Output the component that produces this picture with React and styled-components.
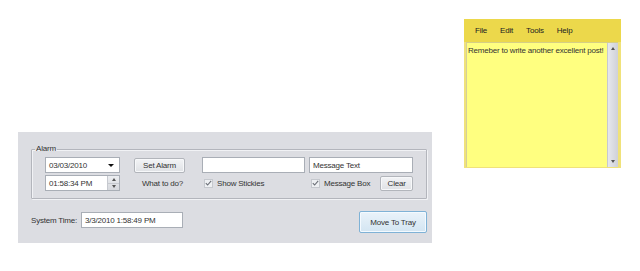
import styled, { createGlobalStyle } from "styled-components";

const Global = createGlobalStyle`
  html, body { margin: 0; padding: 0; background: #fff; }
  body {
    font-family: "Liberation Sans", Arial, sans-serif;
    font-size: 8px;
    letter-spacing: -0.2px;
    color: #333;
  }
`

const Page = styled.div`
  display: flex;
  align-items: flex-start;
  width: 640px;
  height: 271px;
`

const Panel = styled.div`
  margin: 132px 0 0 18px;
  width: 414px;
  box-sizing: border-box;
  padding: 12px 5px 10px 13px;
  background: #dcdde2;
`

const Group = styled.fieldset`
  margin: 0;
  padding: 3px 0 7px 3px;
  border: 1px solid #b3b5bc;
  box-shadow: inset 1px 1px 0 #f1f2f5, 1px 1px 0 #f1f2f5;
  border-radius: 1px;
  legend {
    padding: 0 1px;
    line-height: 10px;
  }
`

const Grid = styled.div`
  margin-left: 10px;
  display: grid;
  grid-template-columns: 89px 68px 107px 104px;
  grid-template-rows: 16px 16px;
  row-gap: 2px;
  align-items: center;
`

const Field = styled.div`
  box-sizing: border-box;
  width: ${(p) => p.w}px;
  height: ${(p) => p.h || 16}px;
  background: #fff;
  border: 1px solid #a9aeb6;
  display: flex;
  align-items: center;
  padding-left: 3px;
  white-space: nowrap;
`

const Arrow = styled.span`
  margin-left: auto;
  margin-right: 5px;
  width: 0;
  height: 0;
  border-left: 3px solid transparent;
  border-right: 3px solid transparent;
  border-top: 3px solid #111;
`

const Spin = styled.div`
  margin-left: auto;
  width: 11px;
  height: 100%;
  display: flex;
  flex-direction: column;
  background: linear-gradient(#eceef1, #d6d8dd);
  border-left: 1px solid #c6c9cf;
  > div {
    flex: 1;
    display: flex;
    align-items: center;
    justify-content: center;
  }
  > div + div { border-top: 1px solid #c6c9cf; }
`

const Tri = styled.span`
  width: 0;
  height: 0;
  border-left: 2.5px solid transparent;
  border-right: 2.5px solid transparent;
  ${(p) => (p.up ? "border-bottom: 3px solid #555;" : "border-top: 3px solid #555;")}
`

const Button = styled.button`
  box-sizing: border-box;
  width: ${(p) => p.w}px;
  height: ${(p) => p.h}px;
  padding: 0;
  font-family: inherit;
  font-size: 8px;
  letter-spacing: -0.2px;
  color: #333;
  white-space: nowrap;
  border: 1px solid ${(p) => (p.focus ? "#7fb2d6" : "#b2b5bb")};
  border-radius: 2px;
  background: ${(p) =>
    p.focus ? "linear-gradient(#eaf3fa, #d3e5f2)" : "linear-gradient(#f3f4f6, #dfe1e5)"};
  box-shadow: inset 0 0 0 1px ${(p) => (p.focus ? "#f4faff" : "#f7f8fa")};
`

const Label = styled.span`
  white-space: nowrap;
  padding-left: ${(p) => p.pl || 0}px;
  width: ${(p) => (p.w ? p.w + "px" : "auto")};
`

const Check = styled.label`
  display: flex;
  align-items: center;
  gap: 4px;
  white-space: nowrap;
  padding-left: 2px;
`

const Box = styled.span`
  box-sizing: border-box;
  width: 9px;
  height: 9px;
  border: 1px solid #c5c8ce;
  background: #eef0f3;
  display: flex;
  align-items: center;
  justify-content: center;
`

const Cell = styled.div`
  display: flex;
  align-items: center;
  gap: ${(p) => p.gap || 0}px;
`

const Bottom = styled.div`
  margin-top: 12px;
  display: flex;
  align-items: flex-start;
  justify-content: space-between;
`

const TimeRow = styled.div`
  margin-top: 1px;
  display: flex;
  align-items: center;
`

const Sticky = styled.div`
  margin: 19px 0 0 32px;
  width: 157px;
  height: 149px;
  box-sizing: border-box;
  background: #f0e27a;
  padding: 0 3px 1px 2px;
  display: flex;
  flex-direction: column;
`

const Menu = styled.div`
  height: 23px;
  margin: 0 -3px 0 -2px;
  background: #ecd84b;
  display: flex;
  align-items: center;
  padding-left: 11px;
  gap: 13px;
  color: #222;
`

const Body = styled.div`
  flex: 1;
  display: flex;
  background: #ffff80;
  border-top: 1px solid #d6cf86;
  border-left: 1px solid #d4cf9a;
`

const Note = styled.div`
  flex: 1;
  overflow: hidden;
  padding: 3px 0 0 1px;
  white-space: nowrap;
`

const Scroll = styled.div`
  width: 11px;
  background: linear-gradient(90deg, #e6e7ec, #cfd1d8);
  border-left: 1px solid #c7c9cf;
  display: flex;
  flex-direction: column;
  justify-content: space-between;
  align-items: center;
  padding: 4px 0;
  box-sizing: border-box;
`

const tick = (
  <svg width="7" height="6" viewBox="0 0 7 6">
    <path d="M0.8 3.2 L2.6 5 L6.2 0.8" fill="none" stroke="#6b6f77" strokeWidth="1.1" />
  </svg>
)

export default function App() {
  return (
    <>
      <Global />
      <Page>
        <Panel>
          <Group>
            <legend>Alarm</legend>
            <Grid>
              <Field w={75}>
                03/03/2010
                <Arrow />
              </Field>
              <Button w={51} h={15}>Set Alarm</Button>
              <Field w={103} />
              <Field w={104}>Message Text</Field>
              <Field w={75}>
                01:58:34 PM
                <Spin>
                  <div><Tri up /></div>
                  <div><Tri /></div>
                </Spin>
              </Field>
              <Label pl={8}>What to do?</Label>
              <Check>
                <Box>{tick}</Box>
                Show Stickies
              </Check>
              <Cell gap={10}>
                <Check>
                  <Box>{tick}</Box>
                  Message Box
                </Check>
                <Button w={33} h={15}>Clear</Button>
              </Cell>
            </Grid>
          </Group>
          <Bottom>
            <TimeRow>
              <Label w={50}>System Time:</Label>
              <Field w={102}>3/3/2010 1:58:49 PM</Field>
            </TimeRow>
            <Button w={68} h={22} focus>Move To Tray</Button>
          </Bottom>
        </Panel>
        <Sticky>
          <Menu>
            <span>File</span>
            <span>Edit</span>
            <span>Tools</span>
            <span>Help</span>
          </Menu>
          <Body>
            <Note>Remeber to write another excellent post!</Note>
            <Scroll>
              <Tri up />
              <Tri />
            </Scroll>
          </Body>
        </Sticky>
      </Page>
    </>
  );
}
